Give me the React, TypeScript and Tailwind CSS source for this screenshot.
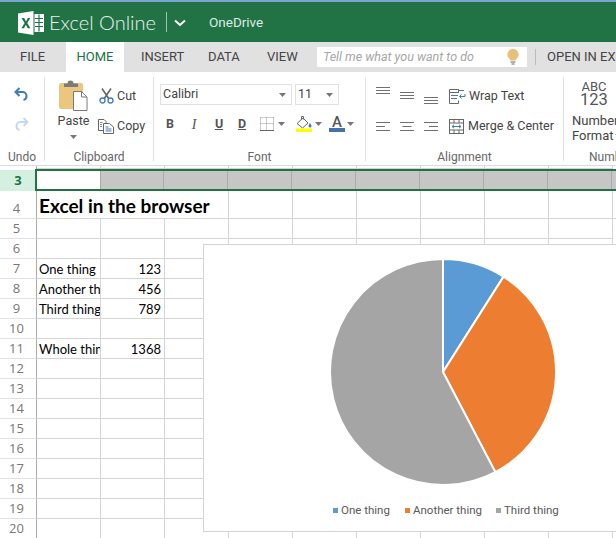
import React from "react";

const sans = "font-['Roboto','Open_Sans',sans-serif]";
const lato = "font-['Lato','Open_Sans',sans-serif]";

const Caret = ({ c = "" }: { c?: string }) => (
  <svg width="7" height="4" viewBox="0 0 7 4" className={`shrink-0 ${c}`}><path d="M0 0h7L3.5 4z" fill="#777" /></svg>
);

const Logo = () => (
  <svg width="26" height="26" viewBox="0 0 26 26" className="ml-[18px] mt-[1px] shrink-0">
    <path d="M0 3.5 15.5 1v24L0 22.5z" fill="#fff" />
    <path d="M16.5 4H26v18h-9.500z" fill="#fff" />
    <path d="M17 8.500h8M17 12.500h8M17 16.500h8M21 4.500v17" stroke="#217346" strokeWidth="1.200" fill="none" />
    <path d="M3.500 8h2.700l1.800 3.400L9.800 8h2.500l-3 5 3.100 5.300H9.700l-1.800-3.600-1.900 3.600H3.400l3.200-5.300z" fill="#217346" />
  </svg>
);

const Undo = ({ color, flip }: { color: string; flip?: boolean }) => (
  <svg width="15" height="14" viewBox="0 0 15 14" style={flip ? { transform: "scaleX(-1)" } : undefined}>
    <path d="M5.500 1 1.500 5l4 4" fill="none" stroke={color} strokeWidth="2" />
    <path d="M2 5h6.500a4 4 0 0 1 4 4 4 4 0 0 1-3 4" fill="none" stroke={color} strokeWidth="2" />
  </svg>
);

const Paste = () => (
  <svg width="29" height="31" viewBox="0 0 29 31">
    <path d="M0 5a2 2 0 0 1 2-2h20a2 2 0 0 1 2 2v24H2a2 2 0 0 1-2-2z" fill="#ecc67f" />
    <path d="M5 7V3.500h3.500a3 3 0 0 1 6 0H19V7z" fill="#7a7a7a" />
    <path d="M14.500 11.500h8l5.500 5.500v13.500H14.500z" fill="#fff" stroke="#7a7a7a" />
    <path d="M22.500 11.500V17H28" fill="none" stroke="#7a7a7a" />
  </svg>
);

const Cut = () => (
  <svg width="15" height="16" viewBox="0 0 15 16">
    <path d="M3 0.500 10 11M12 0.500 5 11" stroke="#666" strokeWidth="1.600" fill="none" />
    <circle cx="3.500" cy="12.500" r="2.500" fill="none" stroke="#3f7cb5" strokeWidth="1.300" />
    <circle cx="11.500" cy="12.500" r="2.500" fill="none" stroke="#3f7cb5" strokeWidth="1.300" />
  </svg>
);

const Copy = () => (
  <svg width="16" height="15" viewBox="0 0 16 15" fill="none">
    <path d="M5 11.500H.500V.500H6L8 2.500V4" stroke="#666" />
    <path d="M5.500 4.500h6l4 3.500v6.500h-10z" fill="#fff" stroke="#666" />
    <path d="M7.500 8h3M7.500 10h6M7.500 12h6" stroke="#3f7cb5" />
    <path d="M2 3.500h2.500M2 5.500h2M2 7.500h2" stroke="#888" />
  </svg>
);

const Borders = () => (
  <svg width="14" height="14" viewBox="0 0 14 14" fill="none">
    <path d="M.5.500h13M.5 6.500h13M.5.500v13M6.500 .500v13M13.500 .500v13" stroke="#999" strokeWidth="1" strokeDasharray="1 1" />
    <path d="M0 13.500h14" stroke="#666" />
  </svg>
);

const Fill = () => (
  <svg width="16" height="16" viewBox="0 0 16 16" fill="none">
    <path d="M1 7.500 7 2l5 5-5.500 5z" fill="#fff" stroke="#666" />
    <path d="M5.500 3.500V.500h2v3" stroke="#666" />
    <path d="M14 7c1 1.500 1.500 2.500 1.500 3a1.500 1.500 0 0 1-3 0c0-.5.500-1.500 1.500-3z" fill="#3f7cb5" />
    <rect x="0" y="12.500" width="16" height="3.500" fill="#ffff00" />
  </svg>
);

const Lines = ({ w = [14, 14, 14], x = [0, 0, 0], gap = 3 }: { w?: number[]; x?: number[]; gap?: number }) => (
  <svg width="14" height={gap * 2 + 1} viewBox={`0 0 14 ${gap * 2 + 1}`} className="block">
    {w.map((width, i) => (
      <rect key={i} x={x[i]} y={i * gap} width={width} height="1" fill="#707070" />
    ))}
  </svg>
);

const Wrap = () => (
  <svg width="17" height="15" viewBox="0 0 17 15" fill="none" className="shrink-0">
    <path d="M.5.500h9v3h-9zM.5 3.500h9M.5 3.500v11h9v-3" stroke="#666" />
    <path d="M2 6.500h7M2 9.500h6" stroke="#3f7cb5" />
    <path d="M10 1.500h5M16 5v2.500h-5M12.500 5.500l-2 2 2 2" stroke="#3f7cb5" />
  </svg>
);

const Merge = () => (
  <svg width="15" height="15" viewBox="0 0 15 15" fill="none" className="shrink-0">
    <rect x=".5" y=".5" width="14" height="14" stroke="#666" />
    <path d="M.5 4h14M.5 11h14M5 .5V4M10 .5V4M5 11v3.500M10 11v3.500" stroke="#666" />
    <path d="M3 7.500h9M5 5.800 3 7.500l2 1.700M10 5.800l2 1.700-2 1.700" stroke="#3f7cb5" />
  </svg>
);

const Bulb = () => (
  <svg width="12" height="16" viewBox="0 0 12 16" className="shrink-0">
    <path d="M6 0a5.500 5.500 0 0 1 3.500 9.800c-.500.500-.700 1-.800 1.700H3.300c-.100-.700-.300-1.200-.800-1.700A5.500 5.500 0 0 1 6 0z" fill="#e8c079" />
    <rect x="3.500" y="12.500" width="5" height="1" fill="#666" />
    <rect x="4.500" y="14.500" width="3" height="1" fill="#666" />
  </svg>
);

const GroupLabel = ({ children }: { children: React.ReactNode }) => (
  <div className="h-[13px] -mb-[3px] text-center text-[12px] leading-[13px] text-[#666] whitespace-nowrap">{children}</div>
);

const Select = ({ w, text }: { w: string; text: string }) => (
  <div className={`${w} h-[21px] border border-[#e1e1e1] flex items-center justify-between pl-[2px] pr-[5px] text-[12.5px] text-[#444]`}>
    <span>{text}</span>
    <Caret />
  </div>
);

const Tool = ({ children, c }: { children: React.ReactNode; c: string }) => (
  <span className={`${c} flex items-center justify-center`}>{children}</span>
);

const rowLabels: Record<number, [string, string]> = {
  7: ["One thing", "123"],
  8: ["Another thing", "456"],
  9: ["Third thing", "789"],
  11: ["Whole thing", "1368"],
};

const RowHead = ({ n, h }: { n: number; h: string }) => (
  <div className={`${h} w-[37px] shrink-0 border-r border-b border-r-[#ababab] border-b-[#e1e1e1] flex items-end justify-center font-['Open_Sans',sans-serif] text-[13px] leading-[20px] text-[#777] pr-[3px]`}>
    {n}
  </div>
);

const EmptyCells = ({ n }: { n: number }) => (
  <>
    {Array.from({ length: n }, (_, i) => (
      <div key={i} className="w-[64px] shrink-0 border-r border-b border-[#d4d4d4]" />
    ))}
  </>
);

const Row = ({ n }: { n: number }) => {
  const d = rowLabels[n];
  return (
    <div className="flex h-[20px]">
      <RowHead n={n} h="h-[20px]" />
      <div className={`w-[64px] shrink-0 border-r border-b border-[#d4d4d4] overflow-hidden whitespace-nowrap pl-[2px] text-[13px] leading-[20px] text-black ${lato}`}>
        {d?.[0]}
      </div>
      <div className={`w-[64px] shrink-0 border-r border-b border-[#d4d4d4] overflow-hidden text-right pr-[3px] text-[13px] leading-[20px] text-black ${lato}`}>
        {d?.[1]}
      </div>
      <EmptyCells n={7} />
    </div>
  );
};

const rad = Math.PI / 180;
const pt = (a: number) => `${115 + 113 * Math.sin(a * rad)} ${115 - 113 * Math.cos(a * rad)}`;
const slice = (a: number, b: number) => `M115 115L${pt(a)}A113 113 0 ${b - a > 180 ? 1 : 0} 1 ${pt(b)}Z`;

const LegendItem = ({ color, text, c }: { color: string; text: string; c: string }) => (
  <div className={`flex items-center ${c}`}>
    <span className={`w-[5px] h-[5px] mr-[3px] mt-[1px] ${color}`} />
    <span>{text}</span>
  </div>
);

export default function App() {
  return (
    <div className={`relative w-[616px] h-[538px] overflow-hidden bg-white ${sans}`}>
      <div className="h-[2px] bg-[#7aa5d3]" />
      <header className="h-[40px] bg-[#217346] flex items-center text-white">
        <Logo />
        <span className={`ml-[5px] w-[117px] shrink-0 whitespace-nowrap text-[20px] font-light leading-none text-[#e9f2ed] ${lato}`}>Excel Online</span>
        <span className="w-px h-[20px] bg-[#9cc2ad] shrink-0" />
        <svg width="12" height="8" viewBox="0 0 12 8" className="ml-[7px] mt-[1px] shrink-0">
          <path d="M1 1.500 6 6l5-4.500" fill="none" stroke="#fff" strokeWidth="2" />
        </svg>
        <span className="ml-[23px] text-[13.5px] text-[#dcebe3]">OneDrive</span>
      </header>

      <nav className="h-[30px] bg-[#e1e1e1] flex items-center text-[13px] text-[#444] overflow-hidden">
        <span className="w-[66px] pl-[20px] shrink-0">FILE</span>
        <span className="w-[58px] h-[30px] shrink-0 bg-white flex items-center justify-center text-[#217346]">HOME</span>
        <span className="w-[67px] pl-[17px] shrink-0">INSERT</span>
        <span className="w-[59px] pl-[17px] shrink-0">DATA</span>
        <span className="w-[67px] pl-[17px] shrink-0">VIEW</span>
        <div className="w-[210px] h-[20px] shrink-0 bg-white flex items-center justify-between pl-[6px] pr-[8px] text-[12.5px] italic text-[#a6a6a6]">
          <span>Tell me what you want to do</span>
          <Bulb />
        </div>
        <span className="ml-[8px] w-px h-[16px] shrink-0 bg-[#bbb]" />
        <span className="ml-[11px] shrink-0 whitespace-nowrap">OPEN IN EXCEL</span>
      </nav>

      <section className="h-[94px] flex pt-[5px] border-b border-[#dcdcdc]">
        <div className="w-[45px] shrink-0 border-r border-[#e1e1e1] h-[84px] flex flex-col items-center">
          <div className="flex-1 flex flex-col items-center pt-[10px] gap-[16px] pr-[2px]">
            <Undo color="#3f7cb5" />
            <Undo color="#c6d9ec" flip />
          </div>
          <GroupLabel>Undo</GroupLabel>
        </div>

        <div className="w-[109px] shrink-0 border-r border-[#e1e1e1] h-[84px] flex flex-col">
          <div className="flex-1 flex text-[12.5px] text-[#444]">
            <div className="ml-[13px] w-[31px] pt-[3px] flex flex-col items-center">
              <Paste />
              <span className="mt-[2px] leading-[16px]">Paste</span>
              <Caret c="mt-[6px]" />
            </div>
            <div className="ml-[9px] pt-[11px] flex flex-col gap-[14px]">
              <div className="flex items-center h-[16px] gap-[3px] pl-[1px]"><Cut /><span>Cut</span></div>
              <div className="flex items-center h-[16px] gap-[3px]"><Copy /><span>Copy</span></div>
            </div>
          </div>
          <GroupLabel>Clipboard</GroupLabel>
        </div>

        <div className="w-[212px] shrink-0 border-r border-[#e1e1e1] h-[84px] flex flex-col">
          <div className="flex-1 pl-[6px] pt-[7px]">
            <div className="flex gap-[3px]">
              <Select w="w-[132px]" text="Calibri" />
              <Select w="w-[44px]" text="11" />
            </div>
            <div className="flex items-center h-[16px] mt-[11px] text-[12.5px] text-[#555]">
              <Tool c="w-[20px] font-bold">B</Tool>
              <Tool c="w-[24px] ml-[2px] italic font-['Liberation_Serif',serif] text-[14px]">I</Tool>
              <Tool c="w-[20px] ml-[3px] font-bold underline">U</Tool>
              <Tool c="w-[20px] ml-[3px] font-bold underline">D</Tool>
              <span className="ml-[8px]"><Borders /></span>
              <Caret c="ml-[4px]" />
              <span className="ml-[11px]"><Fill /></span>
              <Caret c="ml-[3px]" />
              <span className="ml-[7px] w-[16px] flex flex-col items-center text-[15px] leading-[12px] font-medium">
                A
                <span className="w-[16px] h-[4px] bg-[#4472a8]" />
              </span>
              <Caret c="ml-[2px]" />
            </div>
          </div>
          <GroupLabel>Font</GroupLabel>
        </div>

        <div className="w-[198px] shrink-0 border-r border-[#e1e1e1] h-[84px] flex flex-col">
          <div className="flex-1 pl-[10px] pt-[9px] text-[12.5px] text-[#444]">
            <div className="flex h-[18px]">
              <div className="w-[24px] pt-[1px]"><Lines /></div>
              <div className="w-[24px] pt-[6px]"><Lines /></div>
              <div className="w-[25px] pt-[11px]"><Lines /></div>
              <div className="flex items-center gap-[3px] mt-[2px]"><Wrap /><span>Wrap Text</span></div>
            </div>
            <div className="flex h-[18px] mt-[13px] items-center">
              <div className="w-[24px]"><Lines w={[14, 9, 14]} gap={4} /></div>
              <div className="w-[24px]"><Lines w={[14, 9, 14]} x={[0, 2.5, 0]} gap={4} /></div>
              <div className="w-[25px]"><Lines w={[14, 9, 14]} x={[0, 5, 0]} gap={4} /></div>
              <div className="flex items-center gap-[4px]"><Merge /><span className="whitespace-nowrap">Merge &amp; Center</span></div>
            </div>
          </div>
          <GroupLabel>Alignment</GroupLabel>
        </div>

        <div className="flex-1 h-[84px] flex flex-col overflow-hidden pl-[8px]">
          <div className="flex-1 flex flex-col text-[#444] text-[13px] pt-[4px] whitespace-nowrap">
            <div className="w-[44px] text-center text-[13px] leading-[12px] text-[#555]">ABC</div>
            <div className="w-[44px] text-center text-[16.5px] leading-[13px] text-[#555]">123</div>
            <div className="leading-[15px] mt-[7px]">Number</div>
            <div className="leading-[15px] flex items-center gap-[1px]">Format<Caret /></div>
          </div>
          <div className="h-[13px] -mb-[3px] pl-[17px] text-[12px] leading-[13px] text-[#666] whitespace-nowrap">Number</div>
        </div>
      </section>

      <div className="relative">
        <div className="flex h-[3px]">
          <div className="w-[37px] shrink-0 border-r border-[#ababab]" />
          <EmptyCells n={9} />
        </div>

        <div className="relative flex h-[22px]">
          <div className="w-[36px] h-[21px] mt-[1px] shrink-0 bg-[#d3f0e0] flex items-center justify-center font-['Open_Sans',sans-serif] text-[13px] font-bold text-[#217346]">3</div>
          <div className="w-[64px] shrink-0" />
          <div className="flex-1 flex h-[19px] mt-[1.5px] overflow-hidden">
            {Array.from({ length: 9 }, (_, i) => (
              <div key={i} className={`w-[64px] shrink-0 bg-[#c6c6c6] border-r border-[#ababab] ${i === 0 ? "border-l" : ""}`} />
            ))}
          </div>
          <div className="absolute left-[35px] -right-[4px] top-0 h-[22px] border-2 border-[#217346]" />
        </div>

        <div className="flex h-[28px]">
          <RowHead n={4} h="h-[28px]" />
          <div className={`w-[192px] shrink-0 border-r border-b border-[#d4d4d4] whitespace-nowrap pl-[2px] text-[19px] font-bold leading-[30px] text-black ${lato}`}>
            Excel in the browser
          </div>
          <EmptyCells n={7} />
        </div>

        {[5, 6, 7, 8, 9, 10, 11, 12, 13, 14, 15, 16, 17, 18, 19, 20].map((n) => (
          <Row key={n} n={n} />
        ))}

        <div className="absolute left-[203px] top-[78px] w-[420px] h-[288px] bg-white border border-[#d4d4d4]">
          <svg width="230" height="230" viewBox="0 0 230 230" className="ml-[124px] mt-[12px]">
            <path d={slice(0, 32.4)} fill="#5b9bd5" stroke="#fff" strokeWidth="2" />
            <path d={slice(32.4, 152.4)} fill="#ed7d31" stroke="#fff" strokeWidth="2" />
            <path d={slice(152.4, 360)} fill="#a5a5a5" stroke="#fff" strokeWidth="2" />
          </svg>
          <div className="flex items-center h-[16px] mt-[15px] pl-[129px] text-[11.5px] leading-[16px] text-[#595959] whitespace-nowrap">
            <LegendItem color="bg-[#5b9bd5]" text="One thing" c="w-[72px]" />
            <LegendItem color="bg-[#ed7d31]" text="Another thing" c="w-[91px]" />
            <LegendItem color="bg-[#a5a5a5]" text="Third thing" c="" />
          </div>
        </div>
      </div>
    </div>
  );
}
